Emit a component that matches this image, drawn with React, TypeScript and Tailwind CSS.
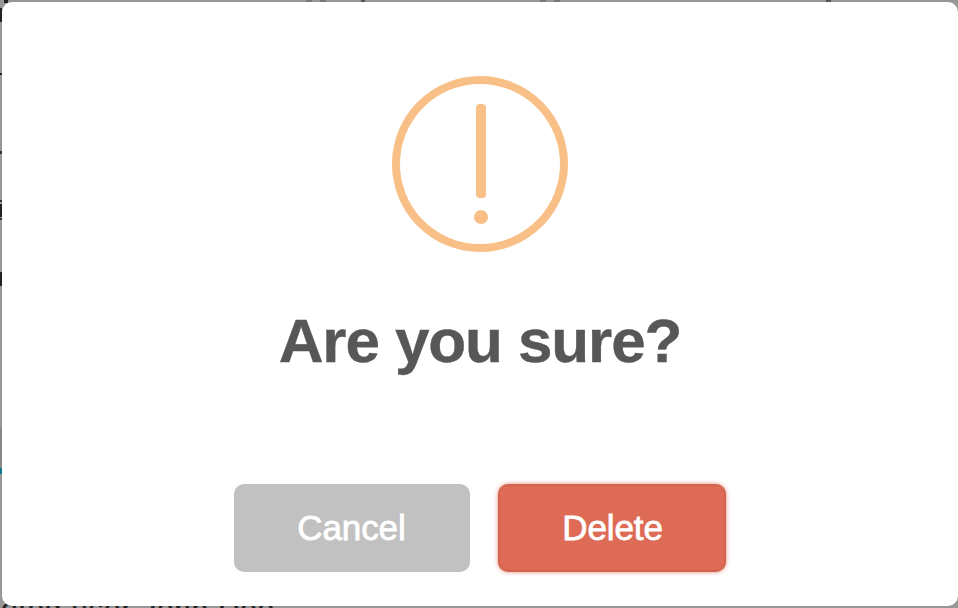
const edgeMarks = [
  "top-[8px] h-[14px] bg-[#222]",
  "top-[73px] h-[2px] bg-[#222]",
  "top-[151px] h-[3px] bg-[#333]",
  "top-[200px] h-[2px] bg-[#333]",
  "top-[204px] h-[13px] bg-[#222]",
  "top-[218px] h-[2px] bg-[#333]",
  "top-[272px] h-[14px] bg-[#222]",
  "top-[428px] h-[40px] bg-[#86868b]",
  "top-[468px] h-[6px] bg-[#087b93]",
];

const topMarks = [
  "left-[4px] w-[4px] bg-[#222]",
  "left-[306px] w-[6px] bg-[#777]",
  "left-[320px] w-[6px] bg-[#777]",
  "left-[361px] w-[4px] bg-[#555]",
  "left-[540px] w-[6px] bg-[#777]",
  "left-[554px] w-[6px] bg-[#777]",
  "left-[826px] w-[5px] bg-[#555]",
];

function Backdrop() {
  return (
    <div aria-hidden="true" className="absolute inset-0 overflow-hidden">
      {edgeMarks.map((mark) => (
        <span key={mark} className={`absolute left-0 w-[2px] ${mark}`} />
      ))}
      {topMarks.map((mark) => (
        <span key={mark} className={`absolute top-0 h-[3px] ${mark}`} />
      ))}
      <p className="absolute right-[683px] top-[593px] whitespace-nowrap text-[29px] leading-[32px] tracking-[1.15px] text-[#222] [-webkit-text-stroke:0.6px_#222]">
        eted user John Doe
      </p>
    </div>
  );
}

function WarningIcon() {
  return (
    <svg viewBox="0 0 176 176" className="size-[176px] shrink-0 text-[#f8bf86]" aria-hidden="true">
      <circle cx="88" cy="88" r="84" fill="none" stroke="currentColor" strokeWidth="8" />
      <rect x="84" y="28" width="10" height="94" rx="4" fill="currentColor" />
      <circle cx="89" cy="141" r="7" fill="currentColor" />
    </svg>
  );
}

export default function App() {
  return (
    <main className="relative h-[608px] w-[958px] overflow-hidden bg-[#979797] pl-[2px] pt-[2px] font-['Liberation_Sans',Arial,sans-serif]">
      <Backdrop />
      <section
        role="dialog"
        aria-labelledby="dialog-title"
        className="relative flex h-[604px] w-[956px] flex-col items-center rounded-[10px] bg-white pt-[74px]"
      >
        <WarningIcon />
        <h2
          id="dialog-title"
          className="mt-[49px] whitespace-nowrap text-[62px] font-bold leading-[80px] tracking-[-1.1px] text-[#575757] [-webkit-text-stroke:0.4px_#575757]"
        >
          Are you sure?
        </h2>
        <div className="mt-[103px] flex gap-[28px] text-[35px] tracking-[-0.1px] text-white [-webkit-text-stroke:0.8px_white]">
          <button className="h-[88px] w-[236px] rounded-[10px] bg-[#c1c1c1] pr-px">Cancel</button>
          <button className="h-[88px] w-[228px] rounded-[10px] bg-[#dd6b55] pl-px shadow-[0_0_4px_rgba(221,107,85,0.8),inset_0_0_0_2px_rgba(0,0,0,0.05)]">
            Delete
          </button>
        </div>
      </section>
    </main>
  );
}
